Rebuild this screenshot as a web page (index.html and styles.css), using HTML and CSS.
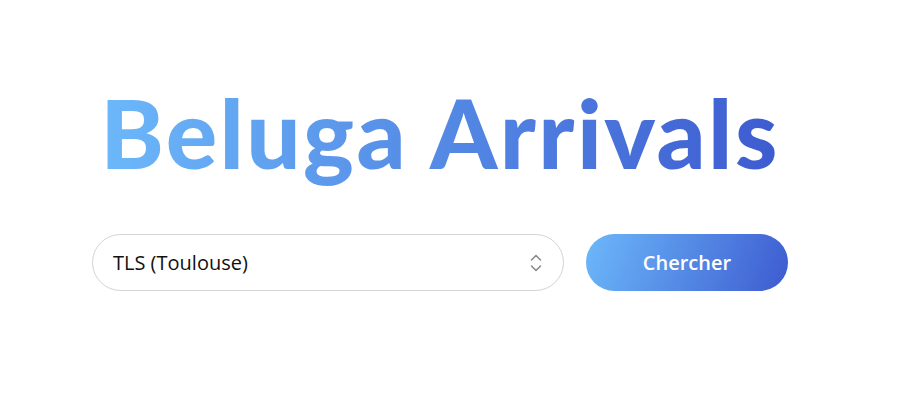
FILE: index.html
```html
<!DOCTYPE html>
<html lang="fr">
<head>
<meta charset="utf-8">
<title>Beluga Arrivals</title>
<link rel="stylesheet" href="styles.css">
</head>
<body>
<main class="page">
  <h1 class="title">Beluga Arrivals</h1>
  <form class="search">
    <div class="select">
      <span class="select-value">TLS (Toulouse)</span>
      <svg class="select-icon" width="14" height="20" viewBox="0 0 14 20" fill="none" stroke="#8a8a8a" stroke-width="1.6" stroke-linecap="round" stroke-linejoin="round">
        <path d="M2.5 7 L7 2.5 L11.5 7"/>
        <path d="M2.5 13 L7 17.5 L11.5 13"/>
      </svg>
    </div>
    <button type="button" class="btn">Chercher</button>
  </form>
</main>
</body>
</html>
```
FILE: styles.css
```css
html, body {
  margin: 0;
  padding: 0;
  background: #ffffff;
}
body {
  font-family: "Open Sans", "Noto Sans", sans-serif;
}
.page {
  width: 880px;
  display: flex;
  flex-direction: column;
  align-items: center;
  padding-top: 72px;
}
.title {
  margin: 0;
  font-family: Lato, "Open Sans", sans-serif;
  font-weight: 900;
  font-size: 96px;
  line-height: 120px;
  letter-spacing: 2.4px;
  background: linear-gradient(90deg, #6cb8fa 0%, #3d5bd0 100%);
  -webkit-background-clip: text;
  background-clip: text;
  color: transparent;
}
.search {
  margin-top: 42px;
  display: flex;
  gap: 22px;
}
.select {
  box-sizing: border-box;
  width: 472px;
  height: 57px;
  border: 1px solid #d4d4d8;
  border-radius: 999px;
  display: flex;
  align-items: center;
  justify-content: space-between;
  padding: 0 20px 0 20px;
  color: #111;
}
.select-value {
  font-size: 20px;
}
.btn {
  width: 202px;
  height: 57px;
  border: none;
  border-radius: 999px;
  background: linear-gradient(110deg, #6cb8fa 0%, #3d5bd0 100%);
  color: #fff;
  font-family: "Open Sans", sans-serif;
  font-weight: 600;
  font-size: 20px;
}
```
